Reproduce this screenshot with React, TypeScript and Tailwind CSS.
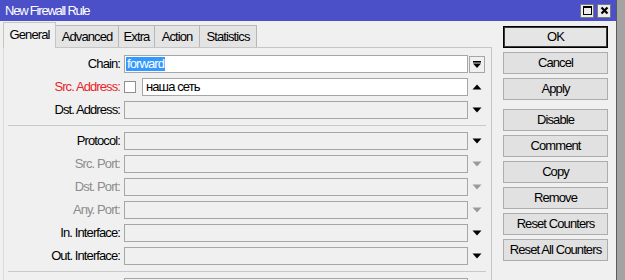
import React from 'react'

const tabs = [
    { name: 'General', w: 'w-[53px]', active: true },
    { name: 'Advanced', w: 'w-[64px]', active: false },
    { name: 'Extra', w: 'w-[37px]', active: false },
    { name: 'Action', w: 'w-[46px]', active: false },
    { name: 'Statistics', w: 'w-[58px]', active: false },
]

const buttons = ['OK', 'Cancel', 'Apply', 'Disable', 'Comment', 'Copy', 'Remove', 'Reset Counters', 'Reset All Counters']

const TriDown = ({ gray }: { gray?: boolean }) => (
    <svg width="10" height="6" viewBox="0 0 10 6">
        <polygon points="0.5,0.5 9.5,0.5 5,5.5" fill={gray ? '#9a9a9a' : '#000'} />
    </svg>
)

const TriUp = () => (
    <svg width="10" height="6" viewBox="0 0 10 6">
        <polygon points="0.5,5.5 9.5,5.5 5,0.5" fill="#000" />
    </svg>
)

const Row = ({ label, tone = 'black', arrow, children }: { label: string, tone?: 'black' | 'red' | 'gray', arrow: React.ReactNode, children?: React.ReactNode }) => {
    const color = tone === 'red' ? 'text-[#e8262a]' : tone === 'gray' ? 'text-[#8c8c8c]' : 'text-black'
    return (
        <div className="flex items-center h-[18px] shrink-0">
            <div className={`w-[116px] text-right leading-[18px] whitespace-nowrap ${color}`}>{label ? `${label}:` : ''}</div>
            <div className="ml-[4px] w-[344px] h-[18px] flex">
                {children ?? <div className="w-full h-full border border-[#a6a6a6] bg-[#f0f0f0]" />}
            </div>
            <div className="ml-[1px] w-[16px] h-[18px] flex items-center justify-center">{arrow}</div>
        </div>
    )
}

const Separator = () => <div className="ml-[4px] w-[478px] h-px shrink-0 bg-[#c8c8c8] my-[6px]" />

export default function App() {
    return (
        <div className="w-[625px] h-[280px] overflow-hidden bg-[#a3a3a3] flex font-['Liberation_Sans',Arial,sans-serif] text-[13px] tracking-[-0.9px] text-black">
            <div className="w-[617px] h-full flex flex-col bg-[#f0f0f0] border-r border-[#5c5c5c]">
                {/* title bar */}
                <div className="h-[21px] shrink-0 bg-[#4b50c8] flex items-center pl-[5px] pr-[5px]">
                    <span className="text-white text-[13px] tracking-[-1.2px] leading-none">New Firewall Rule</span>
                    <div className="ml-auto flex gap-[3px]">
                        <div className="w-[14px] h-[14px] bg-[#ececec] border border-[#7a7a7a] flex items-center justify-center">
                            <div className="w-[9px] h-[9px] border border-black border-t-2" />
                        </div>
                        <div className="w-[14px] h-[14px] bg-[#ececec] border border-[#7a7a7a] flex items-center justify-center">
                            <svg width="9" height="9" viewBox="0 0 9 9">
                                <path d="M1.5 1.5 L7.5 7.5 M7.5 1.5 L1.5 7.5" stroke="#000" strokeWidth="2.2" />
                            </svg>
                        </div>
                    </div>
                </div>

                <div className="flex flex-1 min-h-0">
                    {/* left: tabs + panel */}
                    <div className="ml-[3px] flex flex-col">
                        <div className="h-[26px] shrink-0 flex items-end">
                            {tabs.map((t, i) => (
                                <div
                                    key={t.name}
                                    className={
                                        t.active
                                            ? `${t.w} h-[26px] relative z-10 -mb-px bg-[#f0f0f0] border-l border-t border-r border-[#c6c6c6] flex items-center justify-center pb-[2px]`
                                            : `${t.w} h-[22px] ${i > 0 ? '-ml-px' : ''} bg-[#e4e4e4] border border-b-0 border-[#b7b7b7] flex items-center justify-center`
                                    }
                                >
                                    {t.name}
                                </div>
                            ))}
                        </div>
                        <div className="w-[489px] flex-1 border-l border-t border-r border-l-[#dcdcdc] border-t-[#c6c6c6] border-r-[#c6c6c6] pt-[7px] flex flex-col">
                            <div className="flex flex-col gap-[5px] shrink-0">
                                <Row
                                    label="Chain"
                                    arrow={
                                        <div className="w-[16px] h-[17px] border border-[#a6a6a6] bg-[#f0f0f0] flex items-center justify-center">
                                            <svg width="10" height="9" viewBox="0 0 10 9">
                                                <rect x="1" y="1" width="8" height="1.6" fill="#000" />
                                                <polygon points="1,3.6 9,3.6 5,8" fill="#000" />
                                            </svg>
                                        </div>
                                    }
                                >
                                    <div className="w-full h-full border border-[#a6a6a6] bg-white flex items-center pl-[1px]">
                                        <span className="bg-[#3399ff] text-white leading-[14px] px-px">forward</span>
                                    </div>
                                </Row>
                                <Row label="Src. Address" tone="red" arrow={<TriUp />}>
                                    <div className="w-full h-full flex items-center">
                                        <div className="w-[12px] h-[12px] border border-[#8f8f8f] bg-white" />
                                        <div className="ml-[6px] flex-1 h-full border border-[#a6a6a6] bg-white flex items-center pl-[3px]">
                                            наша сеть
                                        </div>
                                    </div>
                                </Row>
                                <Row label="Dst. Address" arrow={<TriDown />} />
                            </div>
                            <Separator />
                            <div className="flex flex-col gap-[5px] shrink-0">
                                <Row label="Protocol" arrow={<TriDown />} />
                                <Row label="Src. Port" tone="gray" arrow={<TriDown gray />} />
                                <Row label="Dst. Port" tone="gray" arrow={<TriDown gray />} />
                                <Row label="Any. Port" tone="gray" arrow={<TriDown gray />} />
                                <Row label="In. Interface" arrow={<TriDown />} />
                                <Row label="Out. Interface" arrow={<TriDown />} />
                            </div>
                            <Separator />
                            <Row label="" arrow={<TriDown />} />
                        </div>
                    </div>

                    {/* right: buttons */}
                    <div className="ml-[11px] mt-[5px] w-[105px] flex flex-col gap-[4px] tracking-[-0.9px]">
                        {buttons.map((b) => (
                            <div
                                key={b}
                                className={`h-[22px] shrink-0 flex items-center justify-center whitespace-nowrap ${b === 'OK' ? 'border border-black bg-[#e5e5e5] shadow-[inset_0_0_0_1px_#3a3a3a]' : 'border border-[#adadad] bg-[#e1e1e1]'} ${b === 'Disable' ? 'mt-[5px]' : ''}`}
                            >
                                {b}
                            </div>
                        ))}
                    </div>
                </div>
            </div>
        </div>
    )
}
